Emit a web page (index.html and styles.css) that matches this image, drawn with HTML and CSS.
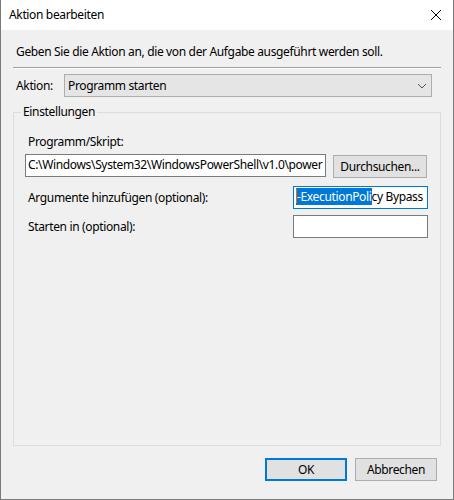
FILE: index.html
```html
<!DOCTYPE html>
<html lang="de">
<head>
<meta charset="utf-8">
<title>Aktion bearbeiten</title>
<link rel="stylesheet" href="styles.css">
</head>
<body>
<div class="window">
  <div class="titlebar">
    <span class="title">Aktion bearbeiten</span>
    <svg class="close" width="12" height="12" viewBox="0 0 12 12"><path d="M1 1 L11 11 M11 1 L1 11" stroke="#000" stroke-width="1" fill="none"/></svg>
  </div>
  <div class="content">
    <p class="intro">Geben Sie die Aktion an, die von der Aufgabe ausgeführt werden soll.</p>
    <div class="sep"></div>
    <div class="action-row">
      <span class="action-label">Aktion:</span>
      <div class="combo">
        <span>Programm starten</span>
        <svg class="chev" width="10" height="6" viewBox="0 0 10 6"><path d="M1 1 L5 5 L9 1" stroke="#555" stroke-width="1" fill="none"/></svg>
      </div>
    </div>
    <fieldset class="group">
      <legend>Einstellungen</legend>
      <div class="field-label">Programm/Skript:</div>
      <div class="prog-row">
        <div class="input prog-input">C:\Windows\System32\WindowsPowerShell\v1.0\power</div>
        <div class="btn browse">Durchsuchen...</div>
      </div>
      <div class="opt-row">
        <span class="opt-label">Argumente hinzufügen (optional):</span>
        <div class="input opt-input focused"><span class="sel"><span class="caret"></span>-ExecutionPoli</span>cy Bypass</div>
      </div>
      <div class="opt-row start-row">
        <span class="opt-label">Starten in (optional):</span>
        <div class="input opt-input"></div>
      </div>
    </fieldset>
    <div class="buttons">
      <div class="btn dlg-btn default">OK</div>
      <div class="btn dlg-btn">Abbrechen</div>
    </div>
  </div>
</div>
</body>
</html>
```

FILE: styles.css
```css
html, body {
  margin: 0;
  padding: 0;
  background: #f0f0f0;
}
body {
  font-family: "Noto Sans", "Open Sans", sans-serif;
  font-size: 12px;
  line-height: 16px;
  letter-spacing: -0.35px;
  color: #000;
}
.window {
  width: 454px;
  height: 500px;
  box-sizing: border-box;
  border: 1px solid #7a7a7a;
  border-top: none;
  background: #f0f0f0;
  display: flex;
  flex-direction: column;
}
.titlebar {
  height: 30px;
  background: #fff;
  display: flex;
  align-items: center;
  padding: 0 9px 0 8px;
  justify-content: space-between;
}
.title {
  font-size: 12px;
}
.close {
  display: block;
  margin-right: 2px;
}
.content {
  padding: 0 12px;
  display: flex;
  flex-direction: column;
}
.intro {
  margin: 14px 0 0 3px;
  height: 16px;
  white-space: nowrap;
}
.sep {
  margin-top: 7px;
  height: 1px;
  border-top: 1px solid #a0a0a0;
  background: #fff;
}
.action-row {
  display: flex;
  align-items: center;
  margin-top: 5px;
  height: 23px;
}
.action-label {
  width: 51px;
  padding-left: 3px;
  box-sizing: border-box;
}
.combo {
  flex: 1;
  margin-right: 9px;
  height: 23px;
  box-sizing: border-box;
  border: 1px solid #adadad;
  background: #e5e5e5;
  display: flex;
  align-items: center;
  justify-content: space-between;
  padding: 0 4px 0 3px;
}
.chev {
  display: block;
}
.group {
  margin: 7px 0 0 0;
  padding: 0;
  border: 1px solid #dcdcdc;
  height: 342px;
  box-sizing: border-box;
  min-width: 0;
}
.group legend {
  margin-left: 7px;
  padding: 0 2px;
  line-height: 16px;
}
.field-label {
  margin: 14px 0 0 14px;
}
.prog-row {
  display: flex;
  margin: 4px 13px 0 11px;
}
.input {
  height: 23px;
  box-sizing: border-box;
  border: 1px solid #7a7a7a;
  background: #fff;
  padding: 2px 0 0 2px;
  white-space: nowrap;
  overflow: hidden;
}
.prog-input {
  width: 301px;
}
.btn {
  height: 23px;
  box-sizing: border-box;
  border: 1px solid #adadad;
  background: #e1e1e1;
  display: flex;
  align-items: center;
  justify-content: center;
}
.browse {
  margin: 1px 0 0 7px;
  width: 94px;
}
.opt-row {
  display: flex;
  align-items: center;
  justify-content: space-between;
  margin: 8px 12px 0 14px;
}
.start-row {
  margin-top: 6px;
}
.opt-input {
  width: 135px;
}
.focused {
  border-color: #0078d7;
}
.sel {
  background: #0078d7;
  color: #fff;
}
.caret {
  display: inline-block;
  width: 1px;
  height: 14px;
  background: #f7630c;
  vertical-align: -2px;
}
.buttons {
  display: flex;
  justify-content: flex-end;
  gap: 8px;
  margin: 12px 4px 0 0;
}
.dlg-btn {
  width: 82px;
}
.default {
  border: 2px solid #0078d7;
}
```
